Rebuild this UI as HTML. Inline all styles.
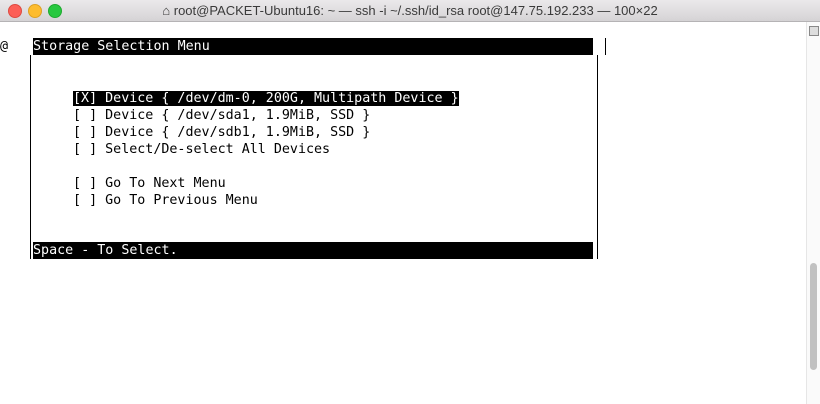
<!DOCTYPE html>
<html><head><style>
body{margin:0;width:820px;height:404px;background:#fff;position:relative;overflow:hidden;font-family:"DejaVu Sans Mono","Liberation Mono",monospace;}
.tb{position:absolute;left:0;top:0;width:820px;height:21px;background:linear-gradient(#ebe9eb,#d5d3d5);border-bottom:1px solid #b5b3b5;}
.dot{position:absolute;top:4px;width:12px;height:12px;border-radius:50%;}
.tt{position:absolute;left:0;width:820px;top:3px;text-align:center;font:13px "Liberation Sans",sans-serif;color:#3a3a3a;}
.r{position:absolute;font-size:13.35px;line-height:17px;height:17px;white-space:pre;color:#000;}
.inv{background:#000;color:#fff;}
.v{position:absolute;width:1px;background:#000;}
</style></head><body>
<div class="tb">
<div class="dot" style="left:8px;background:#fc5f57;border:0.5px solid #de4a41"></div>
<div class="dot" style="left:28px;background:#fdbc2e;border:0.5px solid #dea123"></div>
<div class="dot" style="left:48px;background:#28c840;border:0.5px solid #1eaa2f"></div>
<div class="tt">⌂ root@PACKET-Ubuntu16: ~ — ssh -i ~/.ssh/id_rsa root@147.75.192.233 — 100×22</div>
</div>
<div style="position:absolute;left:806px;top:22px;width:14px;height:382px;background:#fafafa;border-left:1px solid #e6e6e6"></div>
<div style="position:absolute;left:809px;top:26px;width:8px;height:8px;border:1px solid #888;background:#ddd"></div>
<div style="position:absolute;left:810px;top:263px;width:7px;height:107px;border-radius:4px;background:#c1c1c1"></div>
<div class="r" style="left:0;top:38px">@</div>
<div class="r inv" style="left:33px;top:38px;width:560px">Storage Selection Menu</div>
<div class="v" style="left:605px;top:38px;height:17px"></div>
<div class="v" style="left:30px;top:55px;height:204px"></div>
<div class="v" style="left:597px;top:55px;height:204px"></div>
<div class="r" style="left:73px;top:90px"><span class="inv">[X] Device { /dev/dm-0, 200G, Multipath Device }</span></div>
<div class="r" style="left:73px;top:107px">[ ] Device { /dev/sda1, 1.9MiB, SSD }</div>
<div class="r" style="left:73px;top:124px">[ ] Device { /dev/sdb1, 1.9MiB, SSD }</div>
<div class="r" style="left:73px;top:141px">[ ] Select/De-select All Devices</div>
<div class="r" style="left:73px;top:175px">[ ] Go To Next Menu</div>
<div class="r" style="left:73px;top:192px">[ ] Go To Previous Menu</div>
<div class="r inv" style="left:33px;top:242px;width:560px">Space - To Select.</div>
</body></html>
